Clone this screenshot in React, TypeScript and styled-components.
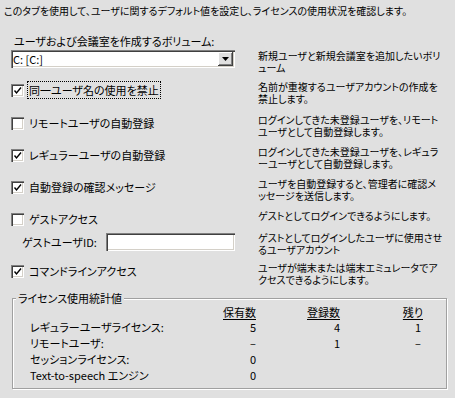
import React from "react";
import styled, { createGlobalStyle } from "styled-components";

type Option = {
  label: string;
  checked: boolean;
  focused?: boolean;
  desc: string[];
  height: number;
};

const OPTIONS: Option[] = [
  {
    label: "同一ユーザ名の使用を禁止",
    checked: true,
    focused: true,
    desc: ["名前が重複するユーザアカウントの作成を", "禁止します。"],
    height: 33,
  },
  {
    label: "リモートユーザの自動登録",
    checked: false,
    desc: ["ログインしてきた未登録ユーザを、リモート", "ユーザとして自動登録します。"],
    height: 32,
  },
  {
    label: "レギュラーユーザの自動登録",
    checked: true,
    desc: ["ログインしてきた未登録ユーザを、レギュラ", "ーユーザとして自動登録します。"],
    height: 32,
  },
  {
    label: "自動登録の確認メッセージ",
    checked: true,
    desc: ["ユーザを自動登録すると、管理者に確認メ", "ッセージを送信します。"],
    height: 32,
  },
  {
    label: "ゲストアクセス",
    checked: false,
    desc: ["ゲストとしてログインできるようにします。"],
    height: 22,
  },
];

const LICENSES = [
  ["レギュラーユーザライセンス:", "5", "4", "1"],
  ["リモートユーザ:", "–", "1", "–"],
  ["セッションライセンス:", "0", "", ""],
  ["Text-to-speech エンジン", "0", "", ""],
];

const Check = () => (
  <svg width="13" height="13" viewBox="0 0 13 13">
    <polyline
      points="3.5,6.5 5.5,9 10,3.5"
      fill="none"
      stroke="#000"
      strokeWidth="1.4"
    />
  </svg>
);

const CheckBox = ({
  label,
  checked,
  focused,
}: {
  label: string;
  checked: boolean;
  focused?: boolean;
}) => (
  <Option>
    <Box>{checked && <Check />}</Box>
    <OptionLabel $focused={!!focused}>{label}</OptionLabel>
  </Option>
);

const Desc = ({ lines }: { lines: string[] }) => (
  <Description>
    {lines.map((l) => (
      <div key={l}>{l}</div>
    ))}
  </Description>
);

const App = () => {
  return (
    <React.Fragment>
      <GlobalStyle />
      <Page>
        <Intro>
          このタブを使用して、ユーザに関するデフォルト値を設定し、ライセンスの使用状況を確認します。
        </Intro>
        <VolumeLabel>ユーザおよび会議室を作成するボリューム:</VolumeLabel>
        <Rows>
          <Row $h={31}>
            <Combo>
              <ComboText>C: [C:]</ComboText>
              <DropButton>
                <svg width="7" height="4" viewBox="0 0 7 4">
                  <polygon points="0,0 7,0 3.5,4" fill="#000" />
                </svg>
              </DropButton>
            </Combo>
            <Desc lines={["新規ユーザと新規会議室を追加したいボリ", "ューム"]} />
          </Row>
          {OPTIONS.map((o) => (
            <Row key={o.label} $h={o.height}>
              <CheckBox label={o.label} checked={o.checked} focused={o.focused} />
              <Desc lines={o.desc} />
            </Row>
          ))}
          <Row $h={30}>
            <GuestId>
              <GuestLabel>ゲストユーザID:</GuestLabel>
              <TextField />
            </GuestId>
            <Desc lines={["ゲストとしてログインしたユーザに使用させ", "るユーザアカウント"]} />
          </Row>
          <Row $h={30}>
            <CheckBox label="コマンドラインアクセス" checked />
            <Desc lines={["ユーザが端末または端末エミュレータでア", "クセスできるようにします。"]} />
          </Row>
        </Rows>
        <Group>
          <Legend>ライセンス使用統計値</Legend>
          <Stats>
            <span />
            <Head>
              <u>保有数</u>
            </Head>
            <Head>
              <u>登録数</u>
            </Head>
            <Head>
              <u>残り</u>
            </Head>
            {LICENSES.map((r) => (
              <React.Fragment key={r[0]}>
                <StatLabel>{r[0]}</StatLabel>
                <Num>{r[1]}</Num>
                <Num>{r[2]}</Num>
                <Num $pad>{r[3]}</Num>
              </React.Fragment>
            ))}
          </Stats>
        </Group>
      </Page>
    </React.Fragment>
  );
};

export default App;

const GlobalStyle = createGlobalStyle`
  html, body {
    margin: 0;
    padding: 0;
    background: #e0e0e0;
  }
  body {
    font-family: "Noto Sans CJK JP", "Noto Sans", sans-serif;
    color: #000;
  }
`;

const Page = styled.div`
  width: 455px;
  height: 398px;
  box-sizing: border-box;
  padding-top: 5px;
  overflow: hidden;
  background: #e0e0e0;
  font-feature-settings: "palt";
`;

const Intro = styled.div`
  padding-left: 4px;
  font-size: 10px;
  line-height: 11px;
  white-space: nowrap;
`;

const VolumeLabel = styled.div`
  margin-top: 19px;
  padding-left: 14px;
  font-size: 11px;
  line-height: 12px;
`;

const Rows = styled.div`
  margin-top: 3px;
  padding-left: 11px;
`;

const Row = styled.div<{ $h: number }>`
  display: grid;
  grid-template-columns: 224px 1fr;
  column-gap: 23px;
  align-items: start;
  height: ${(p) => p.$h}px;
`;

const Description = styled.div`
  font-size: 10px;
  line-height: 12px;
  white-space: nowrap;
`;

const sunken = `
  box-shadow: inset 1px 1px 0 #808080, inset 2px 2px 0 #404040,
    inset -1px -1px 0 #ffffff, inset -2px -2px 0 #d4d0c8;
`;

const Combo = styled.div`
  display: flex;
  align-items: center;
  justify-content: space-between;
  height: 18px;
  box-sizing: border-box;
  padding: 2px;
  background: #fff;
  ${sunken}
`;

const ComboText = styled.span`
  font-size: 11px;
  line-height: 14px;
`;

const DropButton = styled.span`
  display: flex;
  align-items: center;
  justify-content: center;
  width: 15px;
  height: 14px;
  background: #e0e0e0;
  box-shadow: inset -1px -1px 0 #404040, inset 1px 1px 0 #ffffff,
    inset -2px -2px 0 #808080;
`;

const Option = styled.div`
  display: flex;
  align-items: center;
  gap: 3px;
  height: 18px;
`;

const Box = styled.span`
  display: inline-flex;
  width: 13px;
  height: 13px;
  flex: none;
  background: #fff;
  ${sunken}
`;

const OptionLabel = styled.span<{ $focused: boolean }>`
  font-size: 11px;
  line-height: 16px;
  padding: 0 1px;
  border: 1px ${(p) => (p.$focused ? "dotted #000" : "solid transparent")};
  white-space: nowrap;
`;

const GuestId = styled.div`
  display: flex;
  align-items: center;
  height: 18px;
  margin-top: 1px;
`;

const GuestLabel = styled.span`
  padding-left: 11px;
  font-size: 11px;
`;

const TextField = styled.span`
  margin-left: auto;
  width: 129px;
  height: 18px;
  background: #fff;
  ${sunken}
`;

const Group = styled.fieldset`
  margin: 0 8px 0 12px;
  padding: 0 0 5px 0;
  border: 1px solid #a0a0a0;
  box-shadow: inset 1px 1px 0 #fff, 1px 1px 0 #fff;
`;

const Legend = styled.legend`
  margin-left: 3px;
  padding: 0 2px;
  font-size: 11px;
  line-height: 12px;
  background: #e0e0e0;
`;

const Stats = styled.div`
  display: grid;
  grid-template-columns: 193px 33px 84px 83px;
  grid-auto-rows: 16px;
  grid-template-rows: 15px;
  margin-left: 17px;
  font-size: 11px;
  align-items: center;
`;

const Head = styled.span`
  text-align: right;
  line-height: 14px;
  u {
    text-underline-offset: 2px;
  }
`;

const StatLabel = styled.span`
  white-space: nowrap;
`;

const Num = styled.span<{ $pad?: boolean }>`
  text-align: right;
  padding-right: ${(p) => (p.$pad ? 2 : 0)}px;
`;
